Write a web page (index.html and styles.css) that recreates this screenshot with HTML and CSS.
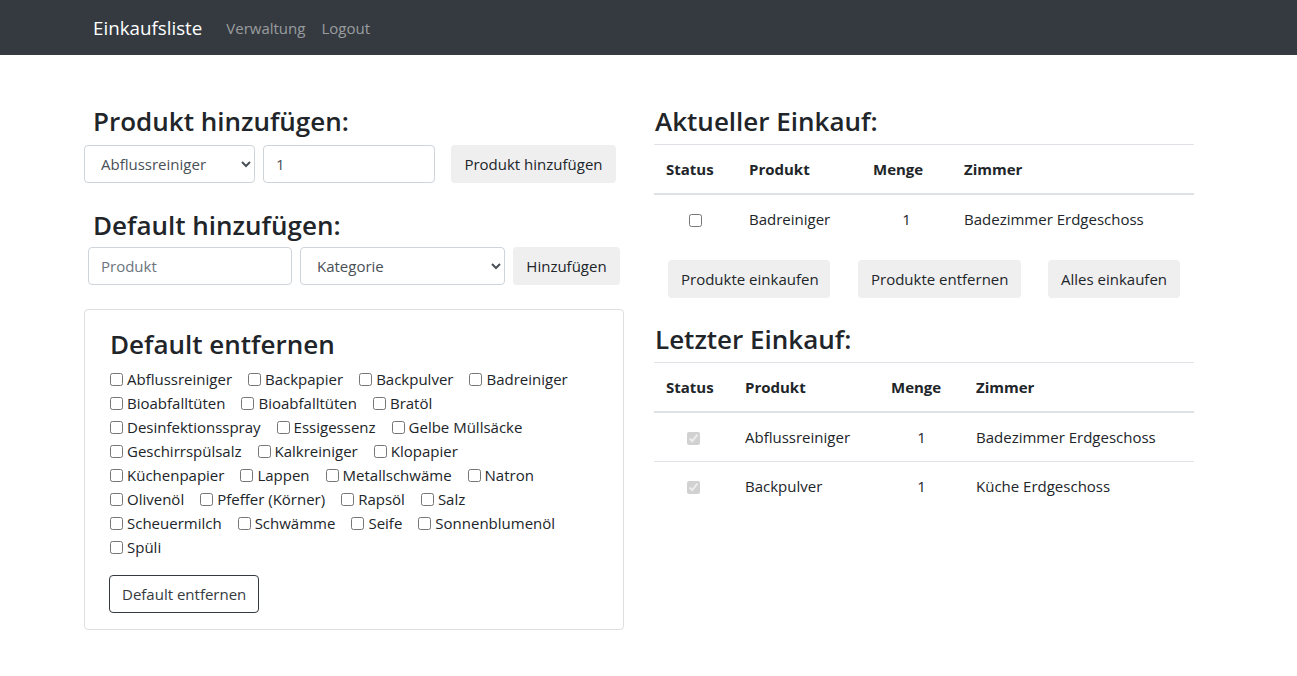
FILE: index.html
```html
<!DOCTYPE html>
<html lang="de">
<head>
<meta charset="utf-8">
<title>Einkaufsliste</title>
<link rel="stylesheet" href="styles.css">
</head>
<body>
<nav class="navbar">
  <a class="brand" href="#">Einkaufsliste</a>
  <a class="nav-link" href="#">Verwaltung</a>
  <a class="nav-link" href="#">Logout</a>
</nav>
<main class="page">
  <section class="col-left">
    <h3 class="title">Produkt hinzufügen:</h3>
    <form class="row-add">
      <select class="control sel-produkt"><option>Abflussreiniger</option></select>
      <input class="control inp-menge" type="text" value="1">
      <button type="button" class="btn btn-light btn-add">Produkt hinzufügen</button>
    </form>
    <h3 class="title title-default">Default hinzufügen:</h3>
    <form class="row-default">
      <input class="control inp-produkt" type="text" placeholder="Produkt">
      <select class="control sel-kategorie"><option>Kategorie</option></select>
      <button type="button" class="btn btn-light btn-hinzu">Hinzufügen</button>
    </form>
    <div class="card">
      <h3 class="card-title">Default entfernen</h3>
      <div class="check-list">
        <label class="check"><input type="checkbox">Abflussreiniger</label>
        <label class="check"><input type="checkbox">Backpapier</label>
        <label class="check"><input type="checkbox">Backpulver</label>
        <label class="check"><input type="checkbox">Badreiniger</label>
        <label class="check"><input type="checkbox">Bioabfalltüten</label>
        <label class="check"><input type="checkbox">Bioabfalltüten</label>
        <label class="check"><input type="checkbox">Bratöl</label>
        <label class="check"><input type="checkbox">Desinfektionsspray</label>
        <label class="check"><input type="checkbox">Essigessenz</label>
        <label class="check"><input type="checkbox">Gelbe Müllsäcke</label>
        <label class="check"><input type="checkbox">Geschirrspülsalz</label>
        <label class="check"><input type="checkbox">Kalkreiniger</label>
        <label class="check"><input type="checkbox">Klopapier</label>
        <label class="check"><input type="checkbox">Küchenpapier</label>
        <label class="check"><input type="checkbox">Lappen</label>
        <label class="check"><input type="checkbox">Metallschwäme</label>
        <label class="check"><input type="checkbox">Natron</label>
        <label class="check"><input type="checkbox">Olivenöl</label>
        <label class="check"><input type="checkbox">Pfeffer (Körner)</label>
        <label class="check"><input type="checkbox">Rapsöl</label>
        <label class="check"><input type="checkbox">Salz</label>
        <label class="check"><input type="checkbox">Scheuermilch</label>
        <label class="check"><input type="checkbox">Schwämme</label>
        <label class="check"><input type="checkbox">Seife</label>
        <label class="check"><input type="checkbox">Sonnenblumenöl</label>
        <label class="check"><input type="checkbox">Spüli</label>
      </div>
      <button type="button" class="btn btn-outline">Default entfernen</button>
    </div>
  </section>

  <section class="col-right">
    <h3 class="title title-right">Aktueller Einkauf:</h3>
    <table class="table">
      <colgroup><col class="c-a1"><col class="c-a2"><col class="c-a3"><col></colgroup>
      <thead>
        <tr><th>Status</th><th>Produkt</th><th>Menge</th><th>Zimmer</th></tr>
      </thead>
      <tbody>
        <tr><td class="center"><input type="checkbox"></td><td>Badreiniger</td><td class="center">1</td><td>Badezimmer Erdgeschoss</td></tr>
      </tbody>
    </table>
    <div class="actions">
      <button type="button" class="btn btn-light act-1">Produkte einkaufen</button>
      <button type="button" class="btn btn-light act-2">Produkte entfernen</button>
      <button type="button" class="btn btn-light act-3">Alles einkaufen</button>
    </div>
    <h3 class="title title-right title-last">Letzter Einkauf:</h3>
    <table class="table">
      <colgroup><col class="c-l1"><col class="c-l2"><col class="c-l3"><col></colgroup>
      <thead>
        <tr><th>Status</th><th>Produkt</th><th>Menge</th><th>Zimmer</th></tr>
      </thead>
      <tbody>
        <tr><td class="center"><input type="checkbox" checked disabled></td><td>Abflussreiniger</td><td class="center">1</td><td>Badezimmer Erdgeschoss</td></tr>
        <tr><td class="center"><input type="checkbox" checked disabled></td><td>Backpulver</td><td class="center">1</td><td>Küche Erdgeschoss</td></tr>
      </tbody>
    </table>
  </section>
</main>
</body>
</html>
```
FILE: styles.css
```css
* { box-sizing: border-box; }
html, body { margin: 0; }
body {
  font-family: "Open Sans", "Noto Sans", "DejaVu Sans", sans-serif;
  font-size: 15px;
  line-height: 24px;
  color: #212529;
  background: #fff;
}

.navbar {
  height: 55px;
  background: #343a40;
  display: flex;
  align-items: center;
  padding-left: 93px;
}
.brand {
  color: #fff;
  font-size: 18.75px;
  text-decoration: none;
  margin-right: 16px;
}
.nav-link {
  color: rgba(255, 255, 255, 0.5);
  text-decoration: none;
  padding: 0 8px;
  font-size: 15px;
}

.page {
  display: flex;
  gap: 30px;
  padding: 49px 0 0 84px;
}
.col-left, .col-right { width: 540px; }

.title {
  margin: 0;
  padding-left: 9px;
  font-size: 26px;
  line-height: 34px;
  font-weight: 600;
}
.title-default { margin-top: 25px; }
.title-right { padding-left: 1px; }
.title-last { margin-top: 24px; }

.control {
  height: 38px;
  border: 1px solid #ced4da;
  border-radius: 4px;
  padding: 6px 12px;
  font-family: inherit;
  font-size: 15px;
  color: #495057;
  background: #fff;
}
.control::placeholder { color: #6c757d; }

.btn {
  height: 38px;
  border: 1px solid transparent;
  border-radius: 4px;
  padding: 6px 12px;
  font-family: inherit;
  font-size: 15px;
  color: #212529;
  text-align: center;
  white-space: nowrap;
}
.btn-light { background: #efefef; }
.btn-outline {
  background: transparent;
  border-color: #343a40;
  color: #343a40;
  width: 150px;
  margin-top: 16px;
  margin-left: -1px;
}

.row-add { display: flex; margin-top: 7px; }
.sel-produkt { width: 171px; }
.inp-menge { width: 172px; margin-left: 8px; }
.btn-add { width: 165px; margin-left: 16px; }

.row-default { display: flex; margin-top: 5px; margin-left: 4px; }
.inp-produkt { width: 204px; }
.sel-kategorie { width: 205px; margin-left: 8px; }
.btn-hinzu { width: 107px; margin-left: 8px; }

.card {
  margin-top: 24px;
  border: 1px solid rgba(0, 0, 0, 0.125);
  border-radius: 4px;
  padding: 17px 24px 16px 25px;
}
.card-title {
  margin: 0;
  font-size: 26px;
  line-height: 34px;
  font-weight: 600;
}
.check-list {
  margin-top: 6px;
  width: 474px;
  display: flex;
  flex-wrap: wrap;
  column-gap: 16px;
}
.check {
  display: inline-flex;
  align-items: center;
  height: 24px;
  white-space: nowrap;
}
.check input {
  width: 13px;
  height: 13px;
  margin: 0 4px 0 0;
}

.table {
  width: 540px;
  margin-top: 6px;
  border-collapse: separate;
  border-spacing: 0;
  table-layout: fixed;
}
.table th {
  text-align: left;
  font-weight: 700;
  padding: 12px;
  border-top: 1px solid #dee2e6;
  border-bottom: 2px solid #dee2e6;
}
.table td { padding: 12px; }
.table tbody tr + tr td { border-top: 1px solid #dee2e6; }
.table td.center { text-align: center; }
.table td input { margin: 0; vertical-align: middle; width: 13px; height: 13px; }
.c-a1 { width: 83px; }
.c-a2 { width: 124px; }
.c-a3 { width: 91px; }
.c-l1 { width: 79px; }
.c-l2 { width: 146px; }
.c-l3 { width: 85px; }

.actions { display: flex; margin-top: 17px; }
.act-1 { width: 162px; margin-left: 14px; }
.act-2 { width: 163px; margin-left: 28px; }
.act-3 { width: 132px; margin-left: 27px; }
```
